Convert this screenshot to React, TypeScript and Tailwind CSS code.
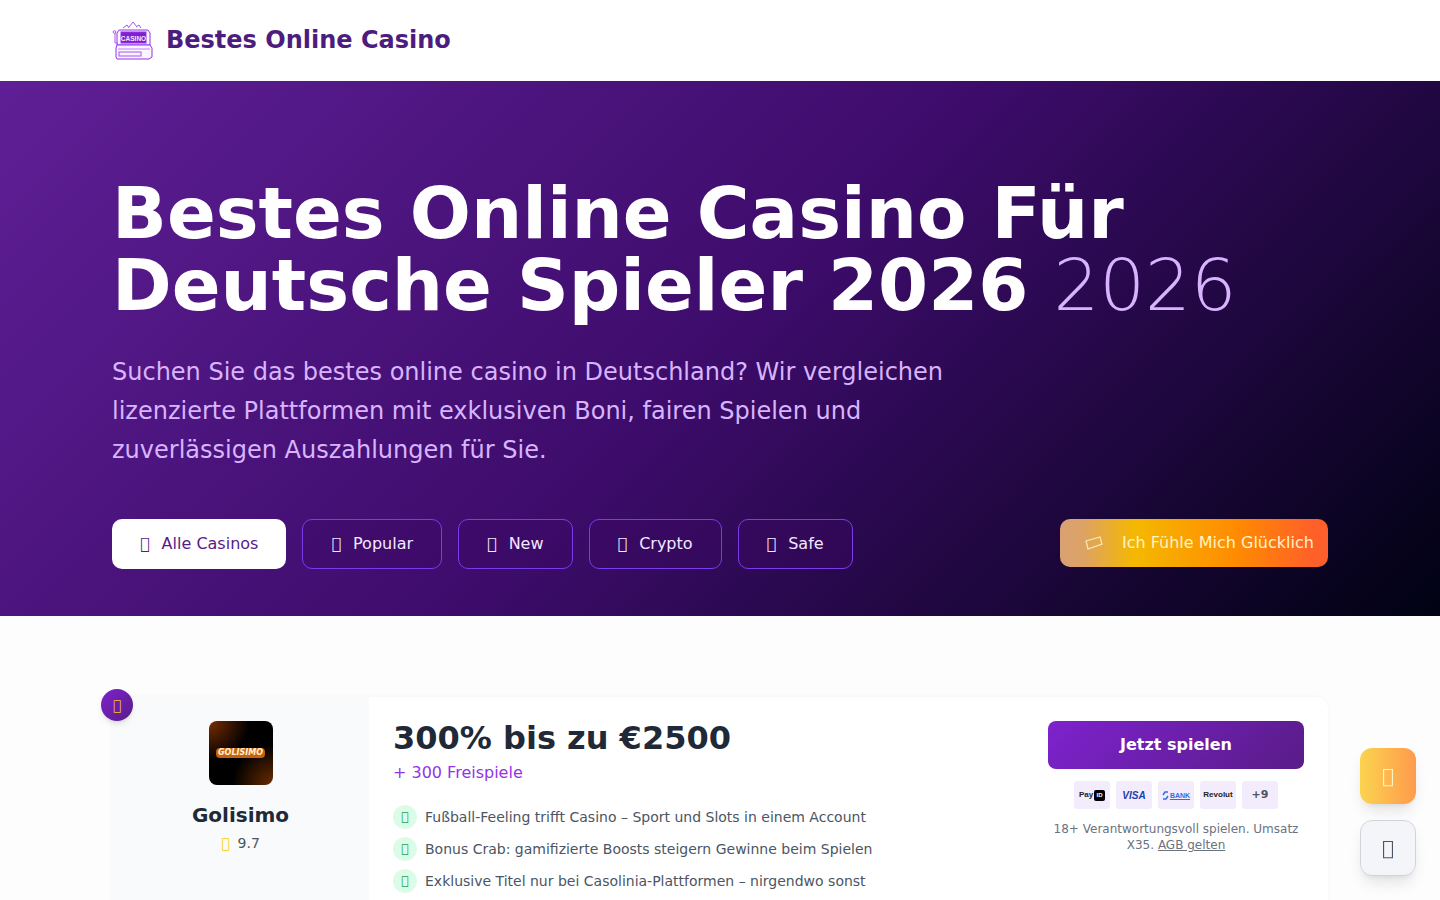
import React from 'react';

const FONT = "font-['DejaVu_Sans',sans-serif]";

// icon font is missing in the reference, so the glyphs show as empty boxes
const Glyph: React.FC<{ className?: string }> = ({ className }) => (
  <span className={`font-['DejaVu_Sans',sans-serif] ${className ?? ''}`}>{'\uf3a5'}</span>
);

const SlotLogo = () => (
  <svg width="42" height="42" viewBox="0 0 42 42" fill="none" stroke="#9333ea" strokeWidth="1">
    <path d="M11 9l4-3 2 3M17 8l4-5 4 5M24 8l3-2 2 3" stroke="#a855f7" />
    <path d="M7 11h29l2 3v12H5V14z" fill="#faf5ff" />
    <rect x="9" y="13" width="25" height="11" fill="#7e22ce" />
    <text x="21.5" y="21.5" fontSize="6.5" fontWeight="700" textAnchor="middle" fill="#f3e8ff" stroke="none" fontFamily="Liberation Sans, sans-serif">CASINO</text>
    <path d="M5 26h33l2 3v9l-3 2H5l-1-2v-9z" fill="#faf5ff" />
    <path d="M6 30h32" stroke="#c084fc" />
    <rect x="7" y="33" width="22" height="4" stroke="#a855f7" />
    <path d="M3 14v10h3" stroke="#a855f7" />
    <circle cx="2.5" cy="13" r="1.3" stroke="#a855f7" />
  </svg>
);

const filters = [
  { label: 'Alle Casinos', active: true },
  { label: 'Popular' },
  { label: 'New' },
  { label: 'Crypto' },
  { label: 'Safe' },
];

const features = [
  'Fußball-Feeling trifft Casino – Sport und Slots in einem Account',
  'Bonus Crab: gamifizierte Boosts steigern Gewinne beim Spielen',
  'Exklusive Titel nur bei Casolinia-Plattformen – nirgendwo sonst',
];

const Chip: React.FC<{ children: React.ReactNode }> = ({ children }) => (
  <div className="w-9 h-7 rounded-[3px] bg-[#f3ecfd] flex items-center justify-center">{children}</div>
);

export default function App() {
  return (
    <div className={`h-[900px] overflow-hidden bg-[#fdfdfe] ${FONT}`}>
      <header className="h-[81px] bg-white">
        <div className="mx-[112px] h-20 flex items-center gap-3">
          <SlotLogo />
          <span className="text-2xl font-bold text-[#4c1d7f]">Bestes Online Casino</span>
        </div>
      </header>

      <section className="h-[535px] bg-[linear-gradient(135deg,#5f1f96_0%,#3d0c6b_50%,#000212_100%)] px-[112px] pt-[96px]">
        <h1 className="text-[72px] leading-[72px] font-bold text-white">
          Bestes Online Casino Für<br />
          Deutsche Spieler 2026 <span className="font-extralight text-[#d8b4fe]">2026</span>
        </h1>
        <p className="mt-8 w-[900px] text-2xl leading-[39px] text-[#d8b4fe]">
          Suchen Sie das bestes online casino in Deutschland? Wir vergleichen lizenzierte Plattformen mit exklusiven Boni, fairen Spielen und zuverlässigen Auszahlungen für Sie.
        </p>
        <div className="mt-[49px] flex items-start justify-between">
          <div className="flex gap-4">
            {filters.map((f) => (
              <button
                key={f.label}
                className={`h-[50px] px-7 rounded-[10px] flex items-center gap-3 text-base ${
                  f.active ? 'bg-white text-[#581c87]' : 'border border-[#7c3aed] bg-[#3b0764]/40 text-[#f3e8ff]'
                }`}
              >
                <Glyph />
                {f.label}
              </button>
            ))}
          </div>
          <button className="w-[268px] h-12 rounded-[10px] flex items-center gap-[18px] pl-[24px] text-base text-[#fff3c4] bg-[linear-gradient(90deg,#d9a173_0%,#dca267_8%,#f5b800_28%,#ff8c00_65%,#ff5f2a_95%)]">
            <svg width="20" height="14" viewBox="0 0 20 14" fill="none" stroke="#fde8b8" strokeWidth="1.2">
              <path d="M2 5l14-4 2 7-14 5z" />
            </svg>
            Ich Fühle Mich Glücklich
          </button>
        </div>
      </section>

      <main className="px-[112px] pt-[81px]">
        <div className="relative flex h-[400px] rounded-xl shadow-[0_0_4px_rgba(0,0,0,0.04)] bg-white">
          <div className="absolute -left-[11px] -top-2 w-8 h-8 rounded-full bg-[linear-gradient(135deg,#7e22ce,#581c87)] shadow-md flex items-center justify-center text-sm text-[#fbbf24]">
            <Glyph />
          </div>
          <div className="w-[257px] bg-[#f9fafc] flex flex-col items-center pt-6">
            <div className="w-16 h-16 rounded-lg flex items-center justify-center bg-[radial-gradient(circle_at_0%_0%,#7a2e00,transparent_45%),radial-gradient(circle_at_100%_100%,#6b2c00,#000_45%)]">
              <span className="px-[2px] bg-[#c8610c] rounded-sm text-[8px] leading-[10px] font-bold italic text-[#fff3d6]">GOLISIMO</span>
            </div>
            <div className="mt-4 text-xl font-bold text-[#1f2937]">Golisimo</div>
            <div className="mt-1 flex items-center gap-2 text-sm text-[#4b5563]">
              <Glyph className="text-[#facc15]" />
              9.7
            </div>
          </div>
          <div className="flex-1 flex justify-between pl-6 pr-6 pt-6">
            <div>
              <div className="text-[32px] leading-[34px] font-bold text-[#1f2937]">300% bis zu €2500</div>
              <div className="mt-[6px] text-base text-[#9333ea]">+ 300 Freispiele</div>
              <ul className="mt-5 flex flex-col gap-2">
                {features.map((t) => (
                  <li key={t} className="flex items-center gap-2 text-sm text-[#4b5563]">
                    <span className="w-6 h-6 rounded-full bg-[#dcfce7] flex items-center justify-center text-xs text-[#16a34a]">
                      <Glyph />
                    </span>
                    {t}
                  </li>
                ))}
              </ul>
            </div>
            <div className="w-[256px] flex flex-col items-center">
              <button className="w-full h-12 rounded-lg text-base font-bold text-white bg-[linear-gradient(135deg,#7e22ce,#581c87)]">Jetzt spielen</button>
              <div className="mt-3 flex gap-[6px]">
                <Chip>
                  <span className="flex items-center gap-[1px] font-['Liberation_Sans',sans-serif] text-[8px] font-bold text-[#222]">Pay<span className="w-[11px] h-[11px] rounded-[2px] bg-black text-white text-[6px] flex items-center justify-center">ID</span></span>
                </Chip>
                <Chip><span className="font-['Liberation_Sans',sans-serif] text-[10px] font-bold italic text-[#1a3fb0]">VISA</span></Chip>
                <Chip>
                  <span className="flex items-center gap-[1px]">
                    <svg width="7" height="11" viewBox="0 0 7 11" fill="none" stroke="#2f6fe0" strokeWidth="1.5"><path d="M1 5l2-3h3M6 6L4 9H1" /></svg>
                    <span className="font-['Liberation_Sans',sans-serif] text-[7px] leading-[7px] font-bold text-[#2f6fe0] underline">BANK</span>
                  </span>
                </Chip>
                <Chip><span className="font-['Liberation_Sans',sans-serif] text-[8px] font-bold text-[#222]">Revolut</span></Chip>
                <Chip><span className="text-[11px] font-bold text-[#4b5563]">+9</span></Chip>
              </div>
              <p className="mt-3 text-center text-xs leading-4 text-[#6b7280]">
                18+ Verantwortungsvoll spielen. Umsatz X35. <span className="underline">AGB gelten</span>
              </p>
            </div>
          </div>
        </div>
      </main>

      <div className="fixed right-6 top-[748px] flex flex-col gap-4">
        <button className="w-14 h-14 rounded-xl bg-[linear-gradient(90deg,#fbd44f,#ff9a4d)] shadow-lg flex items-center justify-center text-xl text-[#fff3c4]">
          <Glyph />
        </button>
        <button className="w-14 h-14 rounded-xl bg-[#f3f5f8] border border-[#d1d5db] shadow-lg flex items-center justify-center text-xl text-[#4b5563]">
          <Glyph />
        </button>
      </div>
    </div>
  );
}
